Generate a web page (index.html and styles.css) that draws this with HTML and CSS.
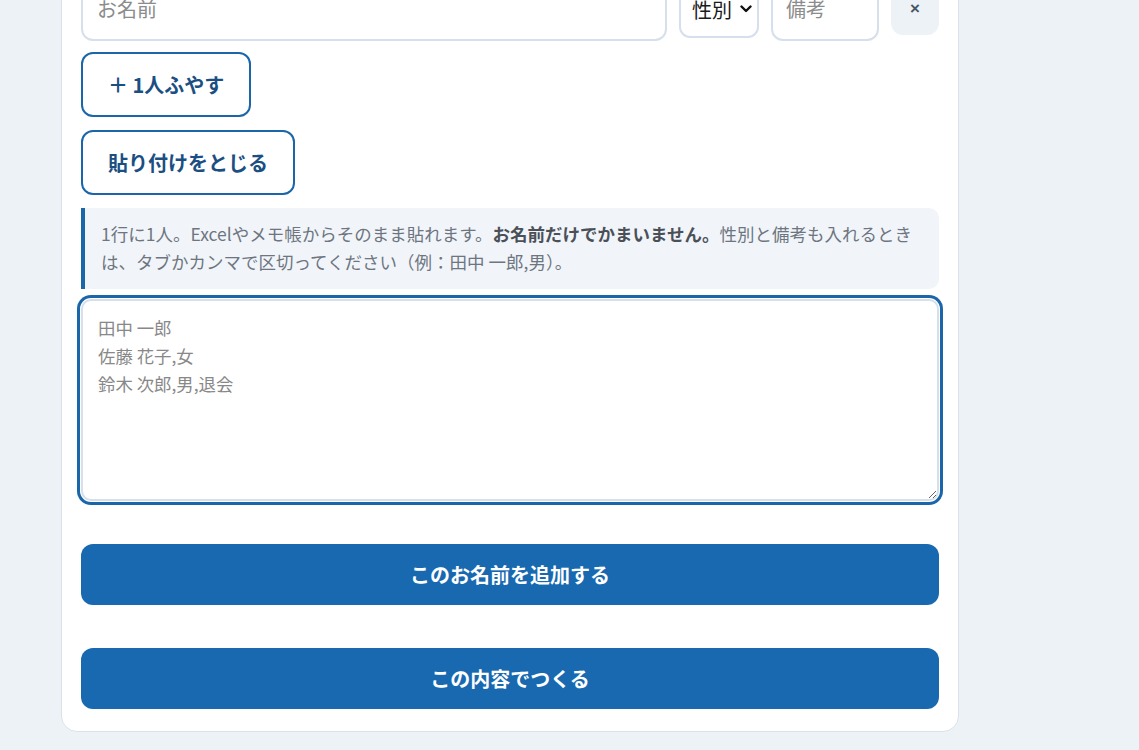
FILE: index.html
```html
<!DOCTYPE html>
<html lang="ja">
<head>
<meta charset="utf-8">
<title>名簿</title>
<link rel="stylesheet" href="styles.css">
</head>
<body>
<main class="card">
  <div class="person-row">
    <input class="field field-name" type="text" placeholder="お名前">
    <select class="field field-gender">
      <option>性別</option>
      <option>男</option>
      <option>女</option>
    </select>
    <input class="field field-note" type="text" placeholder="備考">
    <button class="remove-btn" type="button">×</button>
  </div>
  <button class="outline-btn add-one" type="button">＋ 1人ふやす</button>
  <button class="outline-btn close-paste" type="button">貼り付けをとじる</button>
  <p class="help">1行に1人。Excelやメモ帳からそのまま貼れます。<strong>お名前だけでかまいません。</strong>性別と備考も入れるときは、タブかカンマで区切ってください（例：田中 一郎,男）。</p>
  <textarea class="paste-area" placeholder="田中 一郎&#10;佐藤 花子,女&#10;鈴木 次郎,男,退会"></textarea>
  <button class="primary-btn add-names" type="button">このお名前を追加する</button>
  <button class="primary-btn create" type="button">この内容でつくる</button>
</main>
</body>
</html>
```

FILE: styles.css
```css
html, body {
  margin: 0;
  padding: 0;
  background: #edf2f7;
  font-family: "Noto Sans CJK JP", "Noto Sans", sans-serif;
  overflow: hidden;
}

.card {
  box-sizing: border-box;
  width: 898px;
  margin: -40px 0 0 61px;
  padding: 20px 19px 22px;
  background: #ffffff;
  border: 1px solid #d9e2ec;
  border-radius: 16px;
  display: flex;
  flex-direction: column;
  align-items: flex-start;
}

.person-row {
  display: flex;
  align-items: center;
  gap: 12px;
  width: 100%;
  height: 60px;
}

.field {
  box-sizing: border-box;
  height: 60px;
  border: 2px solid #d5e0ec;
  border-radius: 12px;
  background: #fff;
  font-family: inherit;
  font-size: 20px;
  color: #222;
  padding: 0 14px 6px 14px;
  outline: none;
}

.field::placeholder {
  color: #8c8c8c;
}

.field-name {
  flex: 1;
  min-width: 0;
}

.field-gender {
  appearance: none;
  -webkit-appearance: none;
  flex: none;
  width: 80px;
  height: 54px;
  padding: 0 22px 4px 11px;
  color: #1a1a1a;
  border-radius: 11px;
  background-color: #fff;
  background-image: url("data:image/svg+xml,%3Csvg xmlns='http://www.w3.org/2000/svg' width='12' height='8' viewBox='0 0 12 8'%3E%3Cpath d='M1.5 1.5 6 6l4.5-4.5' fill='none' stroke='%23111' stroke-width='2.4' stroke-linecap='round' stroke-linejoin='round'/%3E%3C/svg%3E");
  background-repeat: no-repeat;
  background-size: 12px 8px;
  background-position: right 5px top 19px;
}

.field-note {
  flex: none;
  width: 108px;
  padding-left: 13px;
}

.remove-btn {
  flex: none;
  width: 48px;
  height: 48px;
  border: none;
  border-radius: 12px;
  background: #edf2f7;
  color: #4b5563;
  font-family: "Liberation Sans", sans-serif;
  font-weight: bold;
  font-size: 17px;
  padding: 0 0 4px;
}

.outline-btn {
  box-sizing: border-box;
  height: 65px;
  margin-top: 11px;
  padding: 0 25px;
  background: #fff;
  border: 2px solid #1a66a9;
  border-radius: 12px;
  color: #1b4f82;
  font-family: inherit;
  font-weight: bold;
  font-size: 20px;
}

.close-paste {
  margin-top: 13px;
}

.help {
  box-sizing: border-box;
  width: 100%;
  margin: 13px 0 0;
  padding: 12px 16px 13px 16px;
  background: #f1f5f9;
  border-left: 4px solid #1a66a9;
  border-radius: 0 10px 10px 0;
  color: #6e7581;
  font-size: 17.5px;
  line-height: 28px;
}

.help strong {
  color: #4b5058;
  font-weight: bold;
}

.paste-area {
  box-sizing: border-box;
  width: 100%;
  height: 202px;
  margin-top: 10px;
  padding: 13px 15px;
  border: 2px solid #d5e0ec;
  border-radius: 10px;
  box-shadow: 0 0 0 1px #ffffff, 0 0 0 4px #1a66a9;
  outline: none;
  font-family: inherit;
  font-size: 17.4px;
  line-height: 28px;
  color: #333;
  resize: vertical;
}

.paste-area::placeholder {
  color: #888;
}

.primary-btn {
  box-sizing: border-box;
  width: 100%;
  height: 61px;
  border: none;
  border-radius: 12px;
  background: #1869b0;
  color: #ffffff;
  font-family: inherit;
  font-weight: bold;
  font-size: 20px;
}

.add-names {
  margin-top: 43px;
}

.create {
  margin-top: 43px;
}
```
